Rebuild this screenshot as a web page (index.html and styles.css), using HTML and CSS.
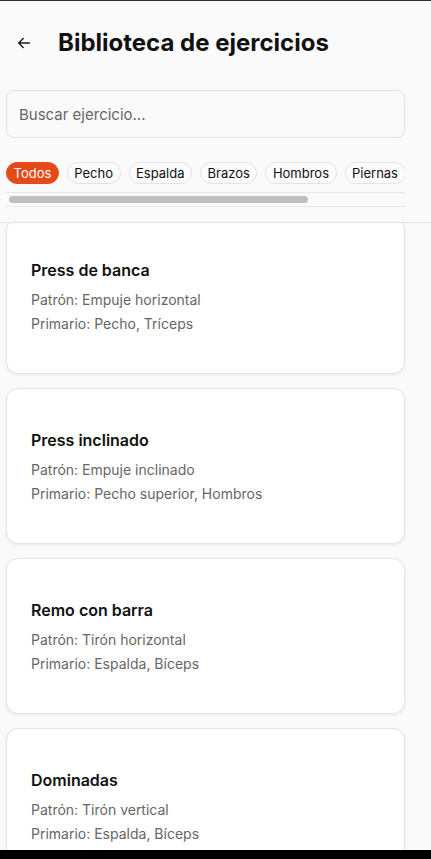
FILE: index.html
```html
<!DOCTYPE html>
<html lang="es">
<head>
<meta charset="utf-8">
<title>Biblioteca de ejercicios</title>
<link rel="stylesheet" href="styles.css">
</head>
<body>
<div class="screen">
  <header class="header">
    <div class="title-row">
      <button class="back" aria-label="Volver">
        <svg width="16" height="16" viewBox="0 0 16 16" fill="none" stroke="#1a1a1a" stroke-width="1.4" stroke-linecap="round" stroke-linejoin="round"><path d="M13.5 8H2.8M7.2 3.5L2.7 8l4.5 4.5"/></svg>
      </button>
      <h1 class="title">Biblioteca de ejercicios</h1>
    </div>
    <div class="search">
      <input class="search-input" type="text" placeholder="Buscar ejercicio...">
    </div>
    <div class="chips">
      <span class="chip chip-active">Todos</span>
      <span class="chip">Pecho</span>
      <span class="chip">Espalda</span>
      <span class="chip">Brazos</span>
      <span class="chip">Hombros</span>
      <span class="chip">Piernas</span>
    </div>
    <div class="scrollbar" aria-hidden="true">
      <div class="scrollbar-thumb"></div>
    </div>
  </header>
  <main class="list">
    <article class="card">
      <h2 class="card-title">Press de banca</h2>
      <p class="card-line">Patrón: Empuje horizontal</p>
      <p class="card-line">Primario: Pecho, Tríceps</p>
    </article>
    <article class="card">
      <h2 class="card-title">Press inclinado</h2>
      <p class="card-line">Patrón: Empuje inclinado</p>
      <p class="card-line">Primario: Pecho superior, Hombros</p>
    </article>
    <article class="card">
      <h2 class="card-title">Remo con barra</h2>
      <p class="card-line">Patrón: Tirón horizontal</p>
      <p class="card-line">Primario: Espalda, Bíceps</p>
    </article>
    <article class="card">
      <h2 class="card-title">Dominadas</h2>
      <p class="card-line">Patrón: Tirón vertical</p>
      <p class="card-line">Primario: Espalda, Bíceps</p>
    </article>
  </main>
</div>
<div class="bottom-bar"></div>
</body>
</html>
```

FILE: styles.css
```css
* { box-sizing: border-box; }

html, body {
  margin: 0;
  padding: 0;
  background: #fafafa;
  font-family: Inter, "Noto Sans", "Liberation Sans", sans-serif;
  color: #111;
  overflow: hidden;
}

.screen {
  height: 850px;
  overflow: hidden;
  border-top: 1px solid #2e2e2e;
  display: flex;
  flex-direction: column;
}

.bottom-bar {
  height: 9px;
  background: #000;
}

.header {
  position: relative;
  z-index: 1;
  background: #fafafa;
  border-bottom: 1px solid #e3e3e3;
  padding: 0 26px 15px 6px;
  flex: none;
}

.title-row {
  display: flex;
  align-items: center;
  height: 48px;
  margin-top: 18px;
}

.back {
  width: 40px;
  height: 40px;
  margin-left: -2px;
  padding: 0;
  border: 0;
  background: transparent;
  display: flex;
  align-items: center;
  justify-content: center;
}

.title {
  margin: 0 0 0 14px;
  font-size: 24px;
  line-height: 32px;
  font-weight: 700;
  color: #111;
}

.search {
  margin-top: 23px;
}

.search-input {
  display: block;
  width: 100%;
  height: 48px;
  border: 1px solid #e2e2e2;
  border-radius: 8px;
  background: #fafafa;
  padding: 0 12px;
  font-family: inherit;
  font-size: 15px;
  color: #111;
  outline: none;
}

.search-input::placeholder {
  color: #666;
}

.chips {
  margin-top: 24px;
  display: flex;
  gap: 8px;
  overflow: hidden;
  padding-bottom: 8px;
}

.chip {
  flex: none;
  height: 22px;
  line-height: 20px;
  padding: 0 6.5px;
  border: 1px solid #e3e3e3;
  border-radius: 11px;
  background: #fcfcfc;
  font-size: 13px;
  color: #111;
  white-space: nowrap;
}

.chip-active {
  background: #e64a19;
  border-color: #e64a19;
  color: #fff;
}

.scrollbar {
  height: 15px;
  border-top: 1px solid #e8e8e8;
  border-bottom: 1px solid #e8e8e8;
  padding: 3px 3px;
}

.scrollbar-thumb {
  width: 299px;
  height: 7px;
  border-radius: 4px;
  background: #bfbfbf;
}

.list {
  margin-top: -5px;
  padding: 0 26px 0 6px;
  display: flex;
  flex-direction: column;
  gap: 14px;
  flex: none;
}

.card {
  height: 156px;
  flex: none;
  background: #fff;
  border: 1px solid #e4e4e4;
  border-radius: 12px;
  box-shadow: 0 1px 3px rgba(0, 0, 0, 0.08);
  padding: 2px 24px 0 24px;
  display: flex;
  flex-direction: column;
  justify-content: center;
}

.card-title {
  margin: 0 0 6px;
  font-size: 16px;
  line-height: 24px;
  font-weight: 600;
  color: #111;
}

.card-line {
  margin: 0;
  font-size: 14px;
  line-height: 24px;
  color: #666;
}
```
